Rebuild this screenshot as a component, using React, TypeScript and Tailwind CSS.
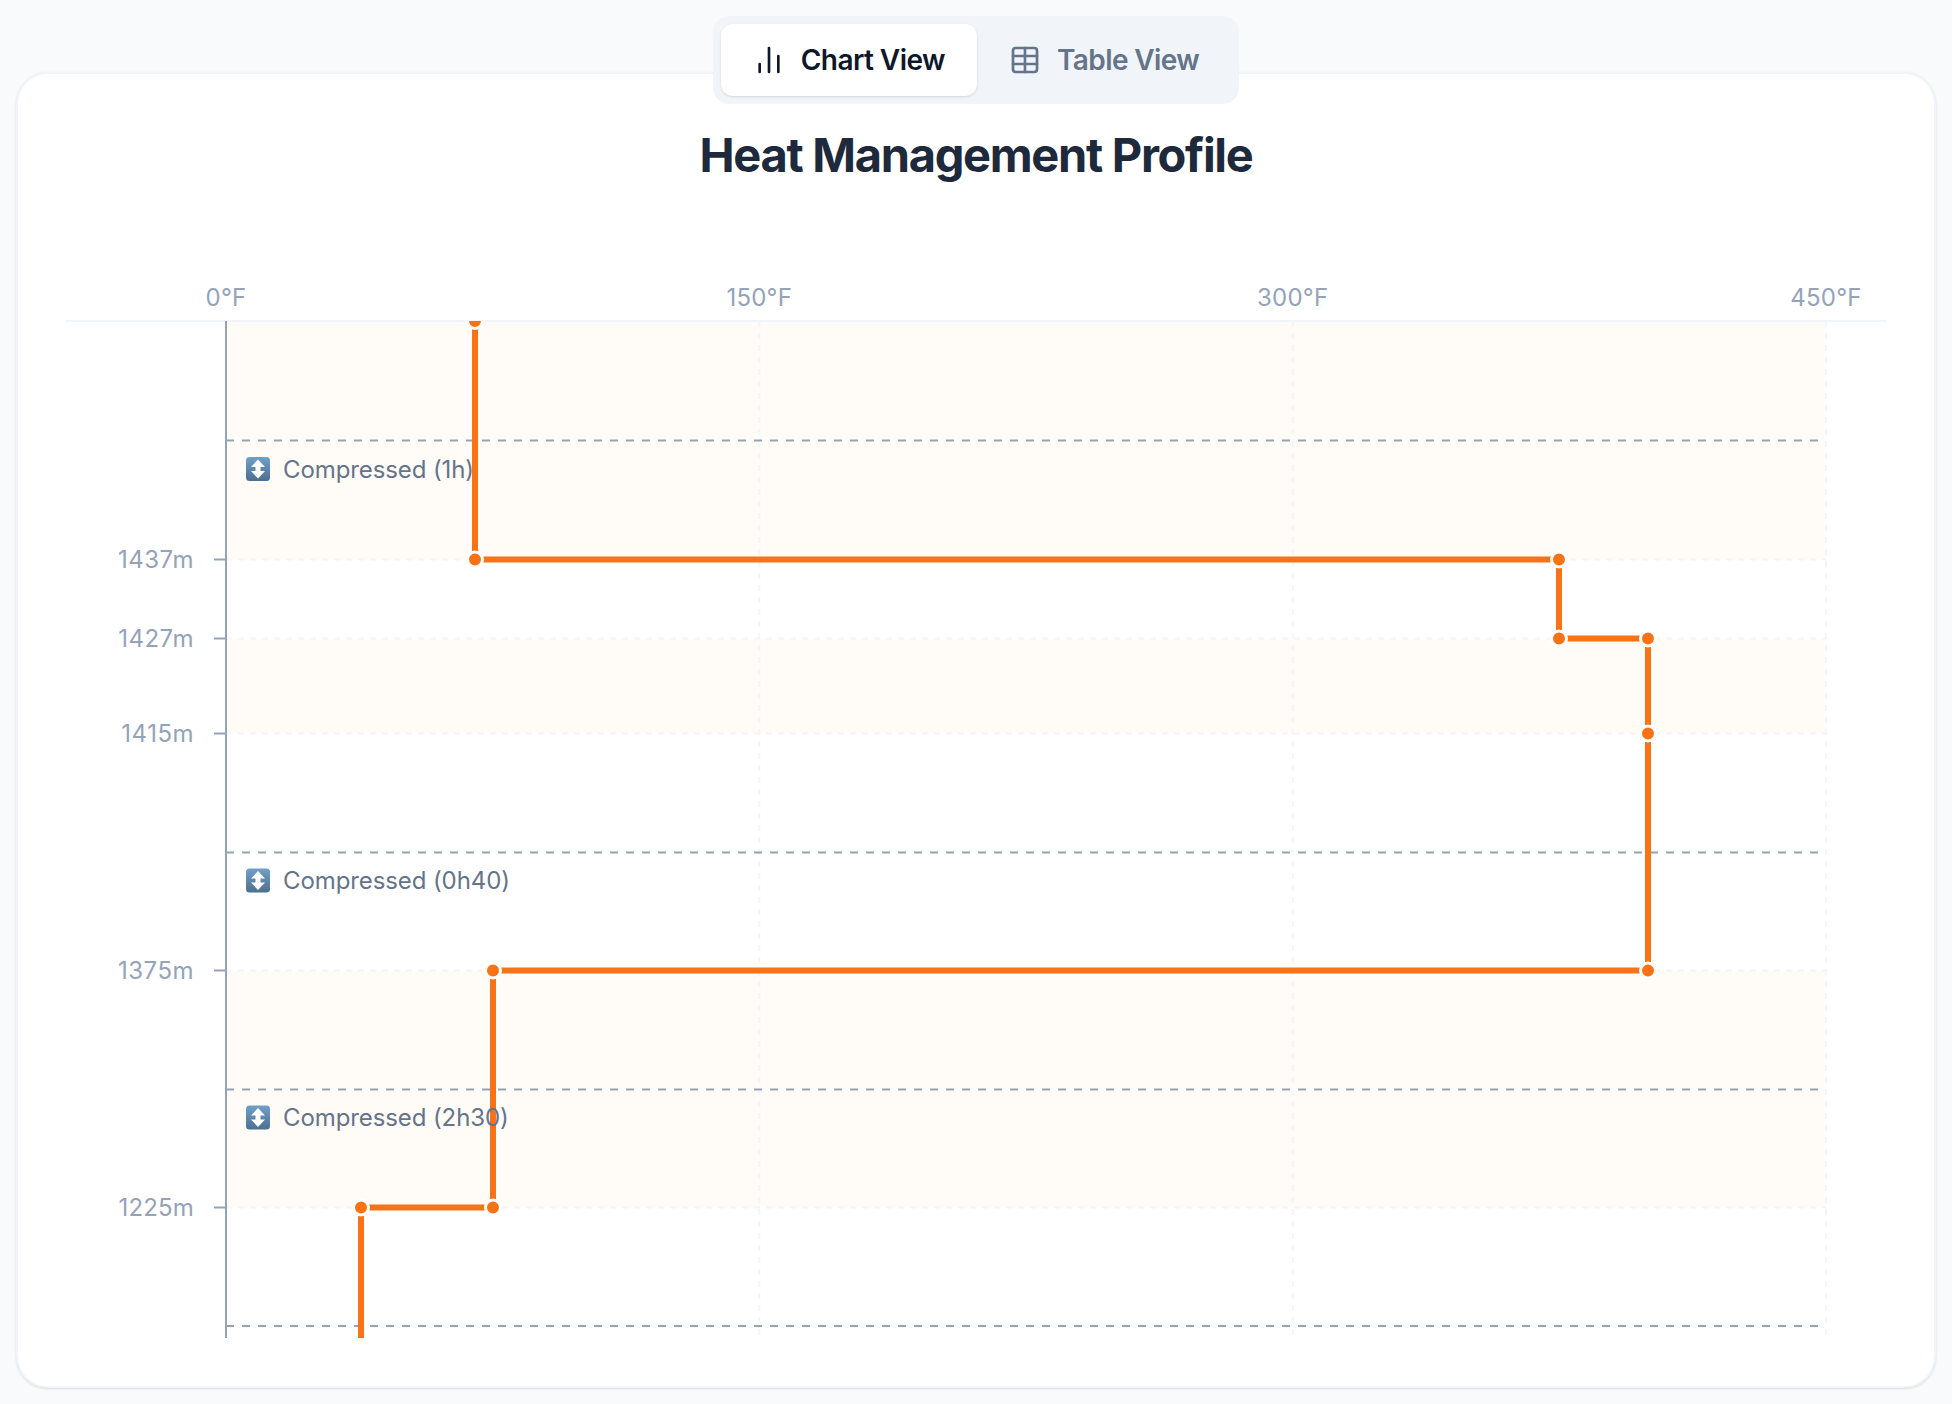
import React from "react";
import { ChartNoAxesColumn, Table } from "lucide-react";

const bands = [
  [321, 559.5],
  [639, 733.5],
  [970.5, 1207.5],
];
const gridY = [559.5, 638.5, 733.5, 970.5, 1207.5];
const gridX = [759.3, 1292.7, 1826];
const dashes = [440.5, 852.5, 1089.5, 1326];
const yLabels: [number, string, number][] = [
  [559.5, "1437m", 0.5],
  [638.5, "1427m", 0.5],
  [733.5, "1415m", 0.5],
  [970.5, "1375m", 0.5],
  [1207.5, "1225m", 0.15],
];
const xLabels: [number, string][] = [
  [226, "0°F"],
  [759.3, "150°F"],
  [1292.7, "300°F"],
  [1826, "450°F"],
];
const points: [number, number][] = [
  [475, 321],
  [475, 559.5],
  [1559, 559.5],
  [1559, 638.5],
  [1648, 638.5],
  [1648, 733.5],
  [1648, 970.5],
  [493, 970.5],
  [493, 1207.5],
  [361, 1207.5],
];
const labels: [number, string][] = [
  [469, "Compressed (1h)"],
  [880.5, "Compressed (0h40)"],
  [1117.5, "Compressed (2h30)"],
];

function Emoji({ y }: { y: number }) {
  return (
    <g transform={`translate(246 ${y - 12})`}>
      <rect width="24" height="24" rx="3.5" fill="url(#emojiBlue)" />
      <path d="M12 2.5 L19 10 H14.5 V14 H19 L12 21.5 L5 14 H9.5 V10 H5 Z" fill="#ffffff" />
    </g>
  );
}

function Chart() {
  const line = points.map((p) => p.join(",")).join(" ") + " 361,1338";
  return (
    <svg
      className="block mt-[91px] w-full h-[1070px]"
      viewBox="66 270 1820 1070"
      style={{ fontFamily: "Inter, sans-serif" }}
    >
      <defs>
        <linearGradient id="emojiBlue" x1="0" y1="0" x2="0" y2="1">
          <stop offset="0" stopColor="#6fa0c9" />
          <stop offset="1" stopColor="#4d6f90" />
        </linearGradient>
        <clipPath id="plot">
          <rect x="226" y="321" width="1620" height="1017" />
        </clipPath>
      </defs>

      {bands.map(([a, b]) => (
        <rect key={a} x="226" y={a} width="1600" height={b - a} fill="#fffbf6" />
      ))}

      {gridY.map((y) => (
        <line key={y} x1="226" x2="1826" y1={y} y2={y} stroke="#f1f5f9" strokeWidth="2" strokeDasharray="6 6" opacity="0.8" />
      ))}
      {gridX.map((x) => (
        <line key={x} x1={x} x2={x} y1="321" y2="1338" stroke="#f1f5f9" strokeWidth="2" strokeDasharray="6 6" opacity="0.8" />
      ))}

      <line x1="66" x2="1886" y1="321" y2="321" stroke="#f1f5f9" strokeWidth="2" />

      {dashes.map((y) => (
        <line key={y} x1="226" x2="1820" y1={y} y2={y} stroke="#94a3b8" strokeWidth="2" strokeDasharray="8 8" />
      ))}

      <line x1="226" x2="226" y1="321" y2="1338" stroke="#94a3b8" strokeWidth="2" />
      {yLabels.map(([y, t, ls]) => (
        <g key={t}>
          <line x1="214" x2="226" y1={y} y2={y} stroke="#94a3b8" strokeWidth="2" />
          <text x="194" y={y + 8.5} textAnchor="end" fontSize="24" fill="#94a3b8" letterSpacing={ls}>
            {t}
          </text>
        </g>
      ))}
      {xLabels.map(([x, t]) => (
        <text key={t} x={x} y="306" textAnchor="middle" fontSize="24" fill="#94a3b8" letterSpacing="0.2">
          {t}
        </text>
      ))}

      <g clipPath="url(#plot)">
        <polyline points={line} fill="none" stroke="#f97316" strokeWidth="6" />
        {points.map(([x, y]) => (
          <circle key={`${x}-${y}`} cx={x} cy={y} r="7.5" fill="#f97316" stroke="#ffffff" strokeWidth="3" />
        ))}
      </g>

      {labels.map(([y, t]) => (
        <g key={t}>
          <Emoji y={y} />
          <text x="283" y={y + 8.5} fontSize="24" fill="#64748b" letterSpacing="-0.1">
            {t}
          </text>
        </g>
      ))}
    </svg>
  );
}

export default function App() {
  return (
    <div className="min-h-[1404px] bg-[#f8fafc] px-4 py-4 font-['Inter',sans-serif]">
      <div className="relative z-10 flex justify-center -mb-8">
        <div className="flex rounded-2xl bg-[#f1f5f9] p-2">
          <button className="flex items-center gap-4 rounded-xl bg-white px-8 py-[18px] text-[28px] leading-9 font-semibold tracking-[-0.55px] text-[#0f172a] shadow-sm">
            <ChartNoAxesColumn size={32} strokeWidth={2} />
            Chart View
          </button>
          <button className="flex items-center gap-4 rounded-xl px-8 py-[18px] text-[28px] leading-9 font-semibold tracking-[-0.6px] text-[#64748b]">
            <Table size={32} strokeWidth={2} />
            Table View
          </button>
        </div>
      </div>
      <div className="h-[1316px] rounded-[32px] border-2 border-[#f1f5f9] bg-white px-12 pt-[57px] shadow-sm">
        <h1 className="text-center text-[47px] leading-[48px] font-bold tracking-[-1.3px] text-[#1e293b]">Heat Management Profile</h1>
        <Chart />
      </div>
    </div>
  );
}
